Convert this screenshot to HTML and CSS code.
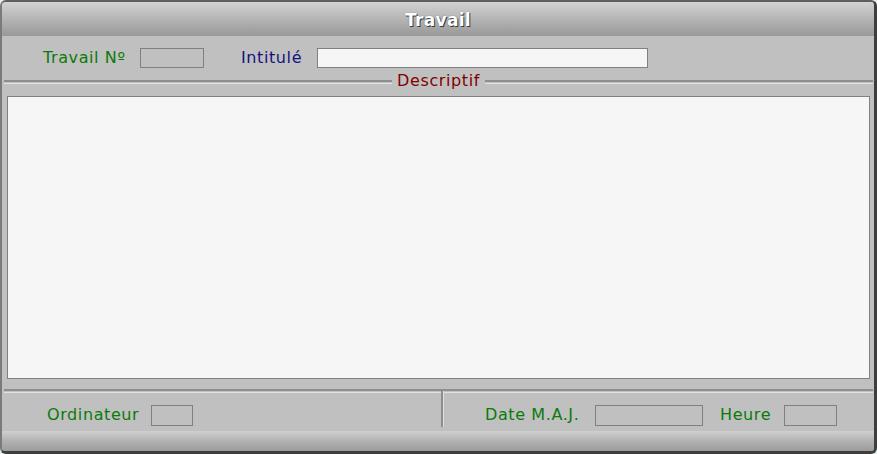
FILE: index.html
```html
<!DOCTYPE html>
<html lang="fr">
<head>
<meta charset="utf-8">
<title>Travail</title>
<link rel="stylesheet" href="styles.css">
</head>
<body>
<div class="window">
  <div class="titlebar">Travail</div>
  <div class="row-top">
    <span class="lbl green lbl-num">Travail Nº</span>
    <span class="box box-num"></span>
    <span class="lbl navy lbl-int">Intitulé</span>
    <span class="box white box-int"></span>
  </div>
  <div class="sep-title">
    <div class="line"></div>
    <span class="legend">Descriptif</span>
    <div class="line"></div>
  </div>
  <div class="memo"></div>
  <div class="sep"><div class="line"></div></div>
  <div class="row-bottom">
    <div class="cell cell-left">
      <span class="lbl green lbl-ord">Ordinateur</span>
      <span class="box box-ord"></span>
    </div>
    <div class="vdiv"></div>
    <div class="cell cell-right">
      <span class="lbl green lbl-date">Date M.A.J.</span>
      <span class="box box-date"></span>
      <span class="lbl green lbl-heure">Heure</span>
      <span class="box box-heure"></span>
    </div>
  </div>
  <div class="statusbar"></div>
</div>
</body>
</html>
```

FILE: styles.css
```css
html, body {
  margin: 0;
  padding: 0;
  background: #e4eeee;
}
body {
  font-family: "DejaVu Sans", Verdana, sans-serif;
  font-size: 16px;
  letter-spacing: 0.6px;
}
.window {
  box-sizing: border-box;
  width: 877px;
  height: 454px;
  background: #c0c0c0;
  border-left: 2px solid #7a7a7a;
  border-top: 2px solid #5e5e5e;
  border-right: 3px solid #3e3e3e;
  border-bottom: 3px solid #3e3e3e;
  border-radius: 6px;
  overflow: hidden;
  display: flex;
  flex-direction: column;
}
.titlebar {
  box-sizing: border-box;
  height: 34px;
  padding-top: 2px;
  flex: none;
  background: linear-gradient(#d2d2d2, #a9a9a9 70%, #999999);
  color: #ffffff;
  font-weight: bold;
  font-size: 17px;
  letter-spacing: 0.3px;
  line-height: 32px;
  text-align: center;
  text-shadow: 1px 1px 0 #3a3a3a, 0 0 1px #555;
}
.row-top {
  height: 44px;
  flex: none;
  display: flex;
  align-items: center;
}
.lbl { white-space: nowrap; line-height: 18px; }
.green { color: #0a7a0a; }
.navy { color: #14127e; }
.box {
  box-sizing: border-box;
  display: block;
  height: 20px;
  border: 1px solid #808080;
  background: #c0c0c0;
  flex: none;
}
.box.white { background: #f6f6f6; }
.lbl-num { margin-left: 41px; width: 97px; }
.box-num { width: 64px; }
.lbl-int { margin-left: 37px; width: 76px; }
.box-int { width: 331px; }

.sep-title {
  height: 16px;
  margin-top: -6px;
  flex: none;
  display: flex;
  align-items: center;
  padding: 0 1px 0 2px;
}
.line {
  flex: 1;
  height: 1px;
  border-top: 2px solid #8e8e8e;
  border-bottom: 1px solid #e2e2e2;
}
.legend {
  color: #800000;
  padding: 0 5px;
  line-height: 16px;
  margin-top: -2px;
}
.memo {
  box-sizing: border-box;
  flex: none;
  height: 283px;
  margin: 6px 4px 0 5px;
  background: #f6f6f6;
  border: 1px solid #808080;
}
.sep {
  flex: none;
  margin-top: 10px;
  display: flex;
  padding: 0 1px 0 2px;
}
.row-bottom {
  flex: none;
  height: 38px;
  display: flex;
}
.cell {
  box-sizing: border-box;
  display: flex;
  align-items: center;
  padding-top: 6px;
}
.cell-left { width: 439px; }
.vdiv {
  width: 2px;
  height: 36px;
  margin-top: -2px;
  background: #8e8e8e;
  border-right: 1px solid #dedede;
  flex: none;
}
.cell-right { flex: 1; }
.box-ord, .box-date, .box-heure { height: 21px; }
.lbl-ord { margin-left: 45px; width: 104px; }
.box-ord { width: 42px; }
.lbl-date { margin-left: 41px; width: 110px; }
.box-date { width: 108px; }
.lbl-heure { margin-left: 17px; width: 64px; }
.box-heure { width: 53px; }
.statusbar {
  flex: none;
  height: 20px;
  background: linear-gradient(#cfcfcf, #b2b2b2 50%, #9c9c9c);
}
```
